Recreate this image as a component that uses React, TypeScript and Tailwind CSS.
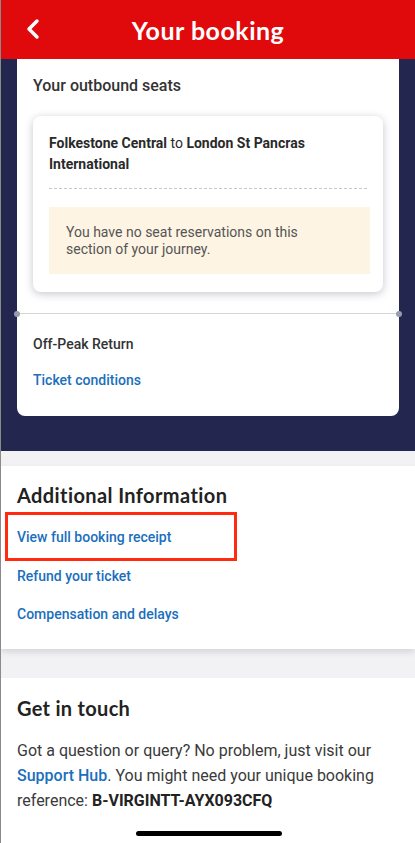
import { ChevronLeft } from "lucide-react";

const body = { fontFamily: "Roboto, 'Liberation Sans', sans-serif" };
const head = { fontFamily: "Lato, 'Noto Sans', sans-serif" };

function LinkText({ children }: { children: React.ReactNode }) {
  return <span className="block text-[14px] leading-[20px] font-medium text-[#1b6fbd]">{children}</span>;
}

export default function App() {
  return (
    <div className="relative h-[843px] w-[415px] overflow-hidden border-l border-[#8a8a8a] bg-[#f2f2f4]" style={body}>
      <header className="relative flex h-[59px] items-center justify-center bg-[#e00a0c]">
        <ChevronLeft className="absolute left-[16px] top-[13px] h-[32px] w-[32px] text-white" strokeWidth={2.6} />
        <h1 className="text-[25px] leading-[30px] font-bold tracking-[0.5px] text-white" style={head}>
          Your booking
        </h1>
      </header>

      <section className="bg-[#23264f] px-[16px] pb-[35px]">
        <div className="rounded-b-[8px] bg-white">
          <div className="px-[16px] pt-[17px] pb-[21px]">
            <h2 className="text-[16px] leading-[20px] font-medium text-[#333]">Your outbound seats</h2>
            <div className="mt-[20px] rounded-[8px] bg-white px-[16px] pt-[17px] pb-[18px] shadow-[0_2px_8px_rgba(30,30,60,0.25)]">
              <p className="text-[14px] leading-[21px] text-[#2a2a2a]">
                <span className="font-bold">Folkestone Central</span> to{" "}
                <span className="font-bold">London St Pancras International</span>
              </p>
              <div className="mt-[13px] border-t border-dashed border-[#c8c8c8]" />
              <div className="mt-[18px] mr-[-3px] bg-[#fdf4e3] pl-[17px] pr-[50px] pt-[17px] pb-[16px] text-[14px] leading-[17px] text-[#555]">
                You have no seat reservations on this section of your journey.
              </div>
            </div>
          </div>
          <div className="relative border-t border-[#d4d4d4]">
            <span className="absolute -left-[3px] -top-[3px] h-[6px] w-[6px] rounded-full bg-[#9a9cae]" />
            <span className="absolute -right-[3px] -top-[3px] h-[6px] w-[6px] rounded-full bg-[#9a9cae]" />
            <div className="px-[16px] pt-[20px] pb-[26px]">
              <p className="text-[14px] leading-[20px] font-medium text-[#333]">Off-Peak Return</p>
              <div className="mt-[16px]">
                <LinkText>Ticket conditions</LinkText>
              </div>
            </div>
          </div>
        </div>
      </section>

      <section className="mt-[15px] bg-white px-[16px] pt-[17px] pb-[25px] shadow-[0_3px_6px_rgba(0,0,0,0.12)]">
        <h2 className="text-[20px] leading-[24px] font-bold tracking-[0.4px] text-[#222]" style={head}>
          Additional Information
        </h2>
        <div className="mt-[5px] flex flex-col">
          <div className="-ml-[12px] w-[232px] border-[3px] border-[#ff2a10] pt-[12px] pb-[11px] pl-[9px]">
            <LinkText>View full booking receipt</LinkText>
          </div>
          <div className="mt-[5px]">
            <LinkText>Refund your ticket</LinkText>
          </div>
          <div className="mt-[18px]">
            <LinkText>Compensation and delays</LinkText>
          </div>
        </div>
      </section>

      <section className="mt-[29px] h-[200px] bg-white px-[16px] pt-[18px]">
        <h2 className="text-[20px] leading-[24px] font-bold tracking-[0.3px] text-[#222]" style={head}>
          Get in touch
        </h2>
        <p className="mt-[18px] text-[16px] leading-[25px] text-[#3a3a3a]">
          Got a question or query? No problem, just visit our{" "}
          <span className="font-medium text-[#1b6fbd]">Support Hub</span>. You might need your unique booking
          reference: <span className="font-bold text-[#222]">B-VIRGINTT-AYX093CFQ</span>
        </p>
      </section>

      <div className="absolute bottom-[7px] left-[135px] h-[5px] w-[146px] rounded-full bg-black" />
    </div>
  );
}
